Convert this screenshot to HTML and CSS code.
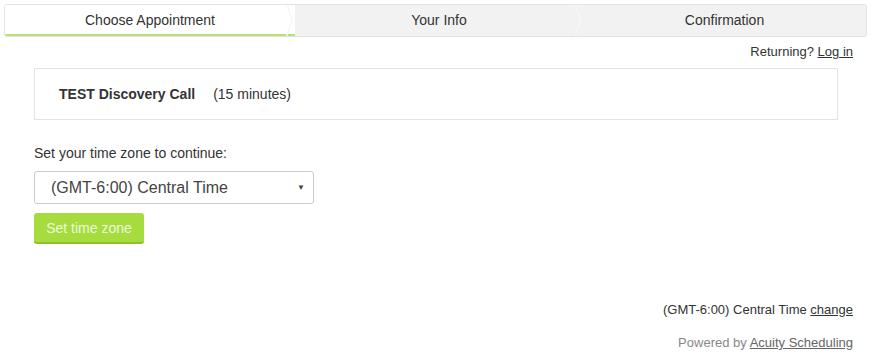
FILE: index.html
```html
<!DOCTYPE html>
<html lang="en">

<head>
    <meta charset="UTF-8">
    <meta name="viewport" content="width=device-width, initial-scale=1.0">
    <title>Schedule Appointment</title>
    <link rel="stylesheet" href="styles.css">
</head>

<body>
    <div class="steps">
        <div class="step active">Choose Appointment</div>
        <div class="step">Your Info</div>
        <div class="step last">Confirmation</div>
    </div>
    <div class="returning">Returning? <a href="#">Log in</a></div>

    <div class="content">
        <div class="appointment">
            <span class="appt-name">TEST Discovery Call</span>
            <span class="appt-length">(15 minutes)</span>
        </div>

        <div class="tz-label">Set your time zone to continue:</div>
        <div class="tz-select">
            <span>(GMT-6:00) Central Time</span>
            <span class="caret">&#9660;</span>
        </div>
        <button class="tz-button">Set time zone</button>
    </div>

    <div class="footer">
        <div class="current-tz">(GMT-6:00) Central Time <a href="#">change</a></div>
        <div class="powered">Powered by <a href="#">Acuity Scheduling</a></div>
    </div>
</body>

</html>
```

FILE: styles.css
```css
body {
    margin: 0;
    padding: 4px 6px 0 4px;
    font-family: "Liberation Sans", Arial, sans-serif;
    color: #333;
    background-color: white;
}

a {
    color: #333;
}

.steps {
    display: grid;
    grid-template-columns: 290px 288px 1fr;
    height: 33px;
    box-sizing: border-box;
    border: 1px solid #e3e3e3;
    border-radius: 3px;
    overflow: hidden;
    background-color: #f2f2f2;
}

.step {
    position: relative;
    display: flex;
    align-items: center;
    justify-content: center;
    font-size: 14px;
    color: #333;
    background-color: #f2f2f2;
    padding-bottom: 2px;
}

.step::after {
    content: "";
    position: absolute;
    right: -4px;
    top: 3px;
    width: 23px;
    height: 23px;
    background-color: #f2f2f2;
    border-top: 1px solid #fff;
    border-right: 1px solid #fff;
    transform: scaleX(0.32) rotate(45deg);
    z-index: 1;
}

.step.last::after {
    display: none;
}

.step.active {
    background-color: white;
    border-bottom: 2px solid #b7df72;
    padding-bottom: 0;
}

.step.active::after {
    background-color: white;
    border-color: #e6e6e6;
}

.returning {
    text-align: right;
    font-size: 13px;
    padding: 7px 14px 0 0;
    line-height: 16px;
}

.content {
    padding: 0 29px 0 30px;
}

.appointment {
    margin-top: 8px;
    height: 50px;
    border: 1px solid #e3e3e3;
    display: flex;
    align-items: center;
    padding-left: 24px;
    font-size: 14px;
}

.appt-name {
    font-weight: bold;
    margin-right: 18px;
}

.tz-label {
    margin-top: 25px;
    font-size: 14px;
}

.tz-select {
    margin-top: 10px;
    border: 1px solid #ccc;
    border-radius: 3px;
    display: flex;
    align-items: center;
    justify-content: space-between;
    padding-left: 16px;
    padding-right: 8px;
    box-sizing: border-box;
    width: 280px;
    height: 33px;
    font-size: 16px;
    color: #444;
}

.caret {
    font-size: 8px;
    color: #444;
}

.tz-button {
    margin-top: 9px;
    width: 110px;
    height: 31px;
    border: none;
    border-bottom: 2px solid #8fc12b;
    border-radius: 3px;
    background-color: #a6dc3d;
    color: #eef9dd;
    font-family: "Liberation Sans", Arial, sans-serif;
    font-size: 14px;
    padding: 0;
}

.footer {
    margin-top: 58px;
    text-align: right;
    font-size: 13px;
    padding-right: 14px;
}

.current-tz {
    line-height: 16px;
}

.powered {
    margin-top: 17px;
    color: #888;
    line-height: 16px;
}

.powered a {
    color: #666;
}
```
